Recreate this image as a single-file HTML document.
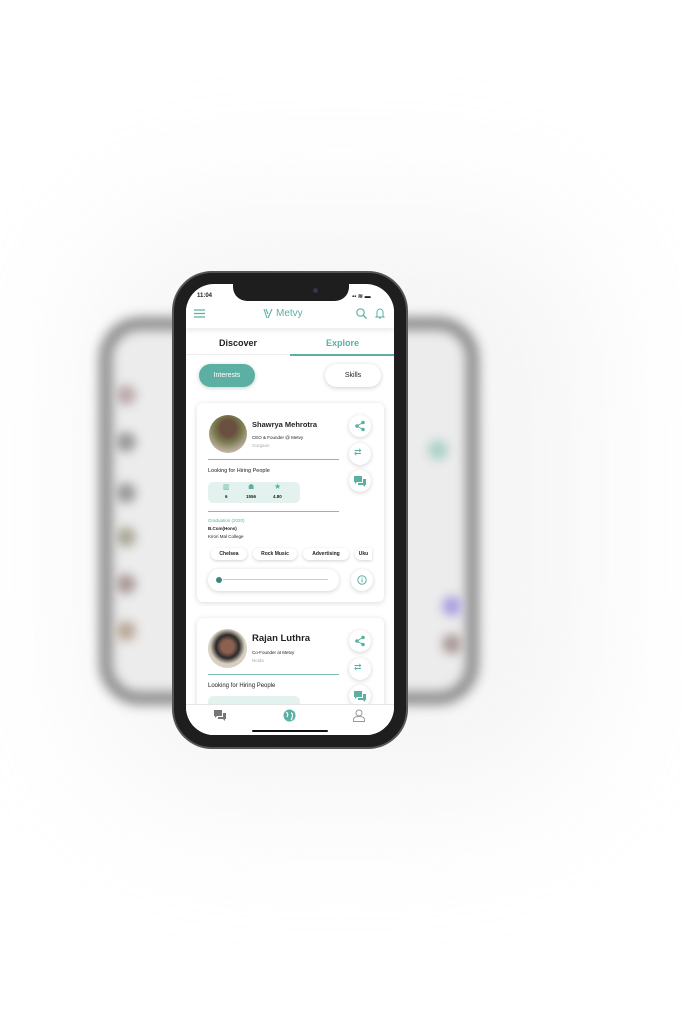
<!DOCTYPE html>
<html><head><meta charset="utf-8"><style>
*{margin:0;padding:0;box-sizing:border-box}
body{width:682px;height:1017px;background:#fff;position:relative;overflow:hidden;font-family:"Liberation Sans",sans-serif;color:#222}
.abs{position:absolute}
.glow{left:90px;top:220px;width:500px;height:580px;border-radius:120px;background:#e2e2e2;filter:blur(70px);opacity:.35}
.back{left:100px;top:318px;width:378px;height:386px;border-radius:40px;border:11px solid #7a7a7a;background:#ececec;filter:blur(6px)}
.phone{left:172px;top:271px;width:236px;height:478px;border-radius:40px;background:#1e1e1e;border:2px solid #555}
.screen{left:186px;top:284px;width:208px;height:451px;border-radius:28px;background:#fff;overflow:hidden}
.notch{left:47px;top:0;width:116px;height:17px;background:#1e1e1e;border-radius:0 0 14px 14px}
.t{position:absolute;white-space:nowrap}
.teal{color:#5bb0a3}
.card{background:#fff;border-radius:6px;box-shadow:0 1px 6px rgba(0,0,0,.15)}
.fab{width:22px;height:22px;border-radius:50%;background:#fff;box-shadow:0 1px 5px rgba(0,0,0,.18)}
.chip{height:12px;border-radius:6px;background:#fff;box-shadow:0 1px 3px rgba(0,0,0,.18);font-size:5px;font-weight:bold;text-align:center;line-height:12px}
.ln{height:1px;background:#7cc0b5}
.av{width:20px;height:20px;border-radius:50%;filter:blur(5px)}
</style></head><body>
<div class="abs glow"></div>
<div class="abs back"></div>
<div class="abs av" style="left:116px;top:385px;background:#b9a9a9"></div>
<div class="abs av" style="left:116px;top:432px;background:#999"></div>
<div class="abs av" style="left:116px;top:483px;background:#999"></div>
<div class="abs av" style="left:116px;top:527px;background:#aaa898"></div>
<div class="abs av" style="left:116px;top:574px;background:#a99"></div>
<div class="abs av" style="left:116px;top:621px;background:#b9a898"></div>
<div class="abs av" style="left:442px;top:596px;background:#a9a0e0"></div>
<div class="abs av" style="left:442px;top:634px;background:#a99"></div>
<div class="abs av" style="left:428px;top:440px;background:#acd0c8"></div>

<div class="abs phone"></div>
<div class="abs screen">
 <div class="abs notch"></div>
 <div class="abs" style="left:127px;top:4px;width:5px;height:5px;border-radius:50%;background:#335"></div>
 <div class="t" style="left:11px;top:9px;font-size:6px;font-weight:bold">11:04</div>
 <div class="t" style="left:166px;top:9px;font-size:6px;font-weight:bold">▪▪ ≋ ▬</div>
 <div class="abs" style="left:0;top:20px;width:208px;height:24px;background:#fff;box-shadow:0 3px 5px rgba(0,0,0,.08)"></div>
 <svg class="abs" style="left:8px;top:25px" width="11" height="9"><path d="M0 1h11M0 4.5h11M0 8h11" stroke="#5bb0a3" stroke-width="1.3"/></svg>
 <svg class="abs" style="left:77px;top:24px" width="10" height="11"><path d="M1 1L4 10M9 1L5 10M3 1L5 6" stroke="#5bb0a3" stroke-width="1.1" fill="none"/></svg>
 <div class="t teal" style="left:90px;top:24px;font-size:10px">Metvy</div>
 <svg class="abs" style="left:170px;top:24px" width="11" height="11"><circle cx="4.5" cy="4.5" r="3.7" stroke="#5bb0a3" stroke-width="1.2" fill="none"/><path d="M7 7l3.5 3.5" stroke="#5bb0a3" stroke-width="1.3"/></svg>
 <svg class="abs" style="left:189px;top:23px" width="10" height="12"><path d="M2 9V5a3 3 0 0 1 6 0v4l1 1H1z M4 11h2" stroke="#5bb0a3" stroke-width="1" fill="none"/></svg>
 <div class="t" style="left:33px;top:54px;font-size:9px;font-weight:bold">Discover</div>
 <div class="t teal" style="left:140px;top:54px;font-size:9px;font-weight:bold">Explore</div>
 <div class="abs" style="left:0;top:70px;width:208px;height:1px;background:#eee"></div>
 <div class="abs" style="left:104px;top:70px;width:104px;height:1.5px;background:#5bb0a3"></div>
 <div class="abs" style="left:13px;top:80px;width:56px;height:23px;border-radius:12px;background:#5bb0a3;box-shadow:0 1px 4px rgba(0,0,0,.2);color:#fff;font-size:7px;text-align:center;line-height:23px">Interests</div>
 <div class="abs" style="left:139px;top:80px;width:56px;height:23px;border-radius:12px;background:#fff;box-shadow:0 1px 5px rgba(0,0,0,.2);font-size:7px;text-align:center;line-height:23px">Skills</div>

 <div class="abs card" style="left:11px;top:119px;width:187px;height:199px"></div>
 <div class="abs" style="left:23px;top:131px;width:38px;height:38px;border-radius:50%;background:radial-gradient(circle at 50% 35%,#6a5040 0 25%,#7a7a50 45%,#bfb0a0 75%)"></div>
 <div class="t" style="left:66px;top:136px;font-size:7.5px;font-weight:bold">Shawrya Mehrotra</div>
 <div class="t" style="left:66px;top:151px;font-size:4.5px">CEO &amp; Founder @ Metvy</div>
 <div class="t" style="left:66px;top:159px;font-size:4.5px;color:#aaa">Gurgaon</div>
 <div class="abs ln" style="left:22px;top:175px;width:131px"></div>
 <div class="t" style="left:22px;top:184px;font-size:5.5px">Looking for Hiring People</div>
 <div class="abs" style="left:22px;top:198px;width:92px;height:21px;border-radius:5px;background:#e3f2ef"></div>
 <div class="t teal" style="left:37px;top:199px;font-size:7px">▥</div>
 <div class="t teal" style="left:62px;top:199px;font-size:7px">☗</div>
 <div class="t teal" style="left:88px;top:198px;font-size:8px">★</div>
 <div class="t" style="left:39px;top:210px;font-size:4.5px;font-weight:bold">6</div>
 <div class="t" style="left:60px;top:210px;font-size:4.5px;font-weight:bold">1556</div>
 <div class="t" style="left:87px;top:210px;font-size:4.5px;font-weight:bold">4.80</div>
 <div class="abs ln" style="left:22px;top:227px;width:131px"></div>
 <div class="t teal" style="left:22px;top:234px;font-size:4.5px">Graduation (2020)</div>
 <div class="t" style="left:22px;top:242px;font-size:4.5px;font-weight:bold">B.Com(Hons)</div>
 <div class="t" style="left:22px;top:250px;font-size:4.5px">Kirori Mal College</div>
 <div class="abs chip" style="left:25px;top:264px;width:36px">Chelsea</div>
 <div class="abs chip" style="left:67px;top:264px;width:44px">Rock Music</div>
 <div class="abs chip" style="left:117px;top:264px;width:46px">Advertising</div>
 <div class="abs chip" style="left:169px;top:264px;width:17px;border-radius:6px 0 0 6px">Uku</div>
 <div class="abs" style="left:22px;top:285px;width:131px;height:22px;border-radius:11px;background:#fff;box-shadow:0 1px 5px rgba(0,0,0,.18)"></div>
 <div class="abs" style="left:37px;top:295px;width:105px;height:1px;background:#ccc"></div>
 <div class="abs" style="left:30px;top:293px;width:6px;height:6px;border-radius:50%;background:#3d8479"></div>
 <div class="abs fab" style="left:165px;top:285px"></div>
 <svg class="abs" style="left:171px;top:291px" width="10" height="10"><circle cx="5" cy="5" r="4.2" stroke="#5bb0a3" fill="none"/><path d="M5 4.3v3M5 2.5v1" stroke="#5bb0a3" stroke-width="1.1"/></svg>
 <div class="abs fab" style="left:163px;top:131px"></div>
 <div class="abs fab" style="left:163px;top:159px"></div>
 <div class="abs fab" style="left:163px;top:186px"></div>
 <svg class="abs" style="left:168px;top:136px" width="12" height="12"><circle cx="9" cy="2.5" r="1.8" fill="#5bb0a3"/><circle cx="3" cy="6" r="1.8" fill="#5bb0a3"/><circle cx="9" cy="9.5" r="1.8" fill="#5bb0a3"/><path d="M9 2.5L3 6L9 9.5" stroke="#5bb0a3" fill="none"/></svg>
 <div class="t teal" style="left:168px;top:163px;font-size:9px">⇄</div>
 <svg class="abs" style="left:168px;top:192px" width="12" height="11"><path d="M0 0h8v6H3l-2 2V6H0z" fill="#5bb0a3"/><path d="M9 3h3v6h-1v2l-2-2H4V7h5z" fill="#5bb0a3"/></svg>

 <div class="abs card" style="left:11px;top:334px;width:187px;height:140px"></div>
 <div class="abs" style="left:22px;top:345px;width:39px;height:39px;border-radius:50%;background:radial-gradient(circle at 50% 45%,#8a6050 0 22%,#2a2a2a 40%,#d8cfc0 60%)"></div>
 <div class="t" style="left:66px;top:349px;font-size:9.5px;font-weight:bold">Rajan Luthra</div>
 <div class="t" style="left:66px;top:366px;font-size:4.5px">Co-Founder at Metvy</div>
 <div class="t" style="left:66px;top:374px;font-size:4.5px;color:#aaa">Noida</div>
 <div class="abs ln" style="left:22px;top:390px;width:131px"></div>
 <div class="t" style="left:22px;top:399px;font-size:6px">Looking for Hiring People</div>
 <div class="abs" style="left:22px;top:412px;width:92px;height:21px;border-radius:5px;background:#e3f2ef"></div>
 <div class="abs fab" style="left:163px;top:346px"></div>
 <div class="abs fab" style="left:163px;top:374px"></div>
 <div class="abs fab" style="left:163px;top:401px"></div>
 <svg class="abs" style="left:168px;top:351px" width="12" height="12"><circle cx="9" cy="2.5" r="1.8" fill="#5bb0a3"/><circle cx="3" cy="6" r="1.8" fill="#5bb0a3"/><circle cx="9" cy="9.5" r="1.8" fill="#5bb0a3"/><path d="M9 2.5L3 6L9 9.5" stroke="#5bb0a3" fill="none"/></svg>
 <div class="t teal" style="left:168px;top:378px;font-size:9px">⇄</div>
 <svg class="abs" style="left:168px;top:407px" width="12" height="11"><path d="M0 0h8v6H3l-2 2V6H0z" fill="#5bb0a3"/><path d="M9 3h3v6h-1v2l-2-2H4V7h5z" fill="#5bb0a3"/></svg>

 <div class="abs" style="left:0;top:420px;width:208px;height:31px;background:#fff;border-top:1px solid #e5e5e5"></div>
 <svg class="abs" style="left:28px;top:426px" width="13" height="11"><path d="M0 0h8v6H3l-2 2V6H0z" fill="#777"/><path d="M9 3h3v6h-1v2l-2-2H4V7h5z" fill="#777"/></svg>
 <svg class="abs" style="left:97px;top:425px" width="13" height="13"><circle cx="6.5" cy="6.5" r="6" fill="#5bb0a3"/><path d="M3 3c2 1 2 3 1 5M8 4c2 0 2 4 0 7" stroke="#fff" stroke-width="1.2" fill="none"/></svg>
 <svg class="abs" style="left:167px;top:425px" width="12" height="13"><circle cx="6" cy="4" r="3" stroke="#999" fill="none"/><path d="M0.5 12.5v-2c0-2 2-3 5.5-3s5.5 1 5.5 3v2z" stroke="#999" fill="none"/></svg>
 <div class="abs" style="left:66px;top:446px;width:76px;height:2px;border-radius:1px;background:#111"></div>
</div>
</body></html>
